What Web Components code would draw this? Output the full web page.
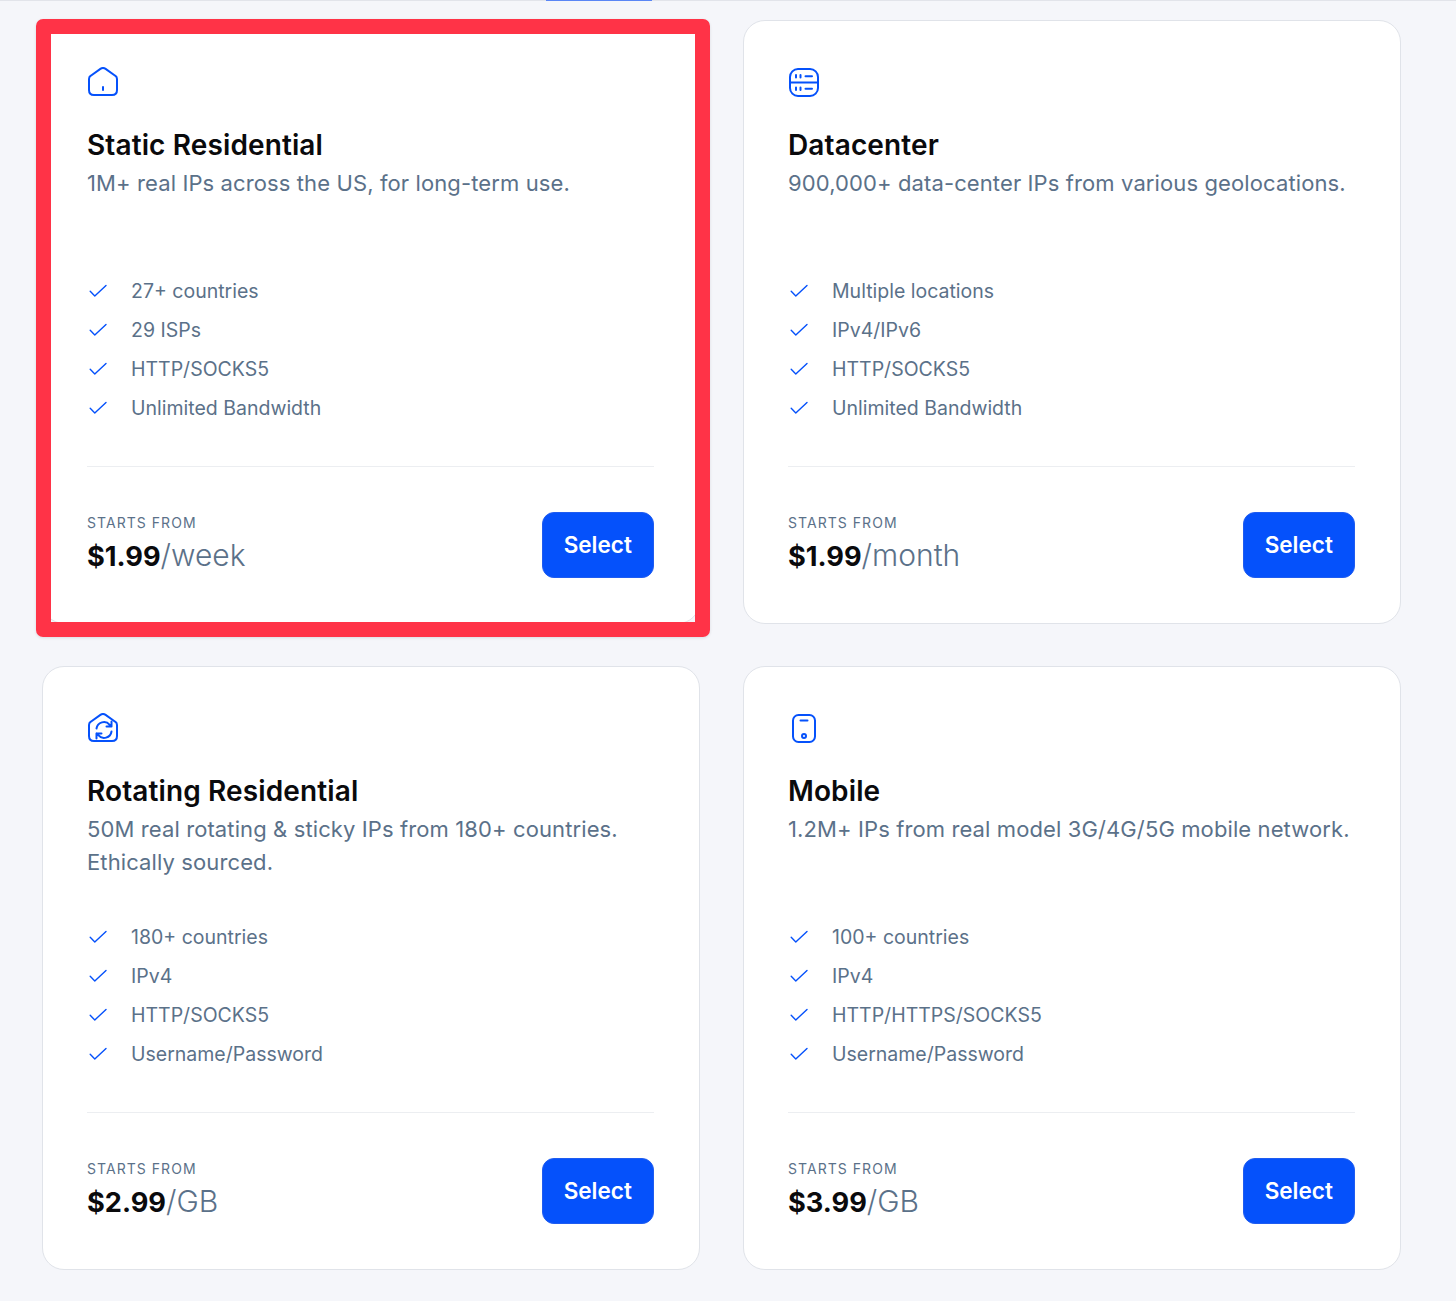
<!DOCTYPE html>
<html>
<head>
<meta charset="utf-8">
<style>
  html, body { margin: 0; padding: 0; }
  body {
    background: #f5f6fa;
    font-family: Inter, "Liberation Sans", sans-serif;
    height: 1301px;
    overflow: hidden;
  }
</style>
</head>
<body>
<template id="plan-card-tpl">
  <style>
    :host {
      display: flex;
      flex-direction: column;
      position: relative;
      box-sizing: border-box;
      height: 604px;
      padding: 46px 44.5px 44px 44.5px;
      background: #fff;
      border: 1px solid #e0e3e9;
      border-radius: 22px;
    }
    :host([highlighted])::after {
      content: "";
      position: absolute;
      left: -6.5px;
      top: -2px;
      width: 674px;
      height: 618px;
      box-sizing: border-box;
      border: 15px solid #ff3347;
      border-radius: 7px;
      box-shadow: 0 1px 3px rgba(30, 40, 60, 0.12);
    }
    .icon { height: 32px; display: flex; align-items: flex-start; margin-left: -0.5px; }
    ::slotted(svg) { display: block; }
    h2 {
      margin: 27px 0 0;
      font-size: 28px;
      line-height: 38px;
      font-weight: 600;
      letter-spacing: 0.12px;
      color: #0a0a0c;
    }
    p {
      margin: 3px 0 0;
      height: 66px;
      font-size: 22px;
      line-height: 33px;
      letter-spacing: 0.11px;
      color: #5b7189;
    }
    ul {
      list-style: none;
      margin: 43px 0 0;
      padding: 0;
      display: flex;
      flex-direction: column;
      gap: 9px;
    }
    .rule { height: 1px; background: #eceef1; margin-top: 43px; }
    .foot {
      display: flex;
      justify-content: space-between;
      align-items: flex-start;
      margin-top: 45px;
    }
    .label {
      margin-top: 1px;
      font-size: 14px;
      line-height: 20px;
      letter-spacing: 1.05px;
      color: #5b7189;
    }
    .price {
      margin-top: 4px;
      font-size: 30px;
      line-height: 36px;
      font-weight: 300;
      color: #5b7189;
    }
    .price b { font-size: 27.2px; font-weight: 700; color: #0a0a0c; }
    button {
      width: 112.5px;
      height: 66px;
      box-sizing: border-box;
      border: 1px solid #1f5cf0;
      border-radius: 12px;
      background: #0551fb;
      color: #fff;
      font: 600 22.5px Inter, "Liberation Sans", sans-serif;
      padding: 0 0 2px;
    }
  </style>
  <div class="icon"><slot name="icon"></slot></div>
  <h2></h2>
  <p></p>
  <ul><slot></slot></ul>
  <div class="rule"></div>
  <div class="foot">
    <div>
      <div class="label">STARTS FROM</div>
      <div class="price"><b></b><span></span></div>
    </div>
    <button>Select</button>
  </div>
</template>

<template id="plan-feature-tpl">
  <style>
    :host {
      display: flex;
      align-items: center;
      height: 30px;
      font-size: 19.5px;
      color: #5b7189;
    }
    svg { width: 18px; height: 16px; margin-left: 1.5px; margin-right: 24.500px; flex: none; }
  </style>
  <svg viewBox="0 0 18 16" fill="none" stroke="#0551fb" stroke-width="1.4" stroke-linecap="round" stroke-linejoin="round"><path d="M1.200 8.300 L5.800 13 L17 2.400"/></svg>
  <slot></slot>
</template>

<template id="plan-grid-tpl">
  <style>
    :host {
      display: grid;
      grid-template-columns: 658px 658px;
      column-gap: 43px;
      row-gap: 42px;
      padding: 19px 0 0 41.5px;
    }
  </style>
  <slot></slot>
</template>

<template id="top-bar-tpl">
  <style>
    :host { display: block; height: 1px; background: #e2e4ea; position: relative; }
    div { position: absolute; left: 546px; width: 106px; top: 0; height: 1px; background: #5a86f5; }
  </style>
  <div></div>
</template>

<top-bar></top-bar>
<plan-grid>
  <plan-card highlighted name="Static Residential" desc="1M+ real IPs across the US, for long-term use." amount="$1.99" unit="/week">
    <svg slot="icon" width="32" height="32" viewBox="0 0 32 32" fill="none" stroke="#0551fb" stroke-width="2" stroke-linecap="round" stroke-linejoin="round"><path d="M2 12 c0-1.400.6-2.500 1.800-3.300 L13.400 1.900 c1.600-1.100 3.600-1.100 5.200 0 L28.200 8.700 c1.200.8 1.800 1.900 1.800 3.300 V23 c0 3-2 5-5 5 H7 c-3 0-5-2-5-5 Z"/><path d="M16 20 v3"/></svg>
    <plan-feature>27+ countries</plan-feature>
    <plan-feature>29 ISPs</plan-feature>
    <plan-feature>HTTP/SOCKS5</plan-feature>
    <plan-feature>Unlimited Bandwidth</plan-feature>
  </plan-card>
  <plan-card name="Datacenter" desc="900,000+ data-center IPs from various geolocations." amount="$1.99" unit="/month">
    <svg slot="icon" width="32" height="32" viewBox="0 0 32 32" fill="none" stroke="#0551fb" stroke-width="2" stroke-linecap="round" stroke-linejoin="round"><rect x="2" y="2" width="28" height="27" rx="8"/><path d="M2 15.500 H30"/><path d="M8 8 v2.500 M12.500 8 v2.500 M17.500 9.200 H24"/><path d="M8 20.500 v2.500 M12.500 20.500 v2.500 M17.500 21.700 H24"/></svg>
    <plan-feature>Multiple locations</plan-feature>
    <plan-feature>IPv4/IPv6</plan-feature>
    <plan-feature>HTTP/SOCKS5</plan-feature>
    <plan-feature>Unlimited Bandwidth</plan-feature>
  </plan-card>
  <plan-card name="Rotating Residential" desc="50M real rotating &amp; sticky IPs from 180+ countries. Ethically sourced." amount="$2.99" unit="/GB">
    <svg slot="icon" width="32" height="32" viewBox="0 0 32 32" fill="none" stroke="#0551fb" stroke-width="2" stroke-linecap="round" stroke-linejoin="round"><path d="M2 12 c0-1.400.6-2.500 1.800-3.300 L13.400 1.900 c1.600-1.100 3.600-1.100 5.200 0 L28.200 8.700 c1.200.8 1.800 1.900 1.800 3.300 V23 c0 3-2 5-5 5 H7 c-3 0-5-2-5-5 Z"/><path d="M9.500 15.500 a7.500 7.500 0 0 1 13.200-3.700 l1.800 1.700 M24.500 8.500 v5 h-5"/><path d="M24.500 18.500 a7.500 7.500 0 0 1-13.200 3.700 l-1.800-1.700 M9.500 25.500 v-5 h5"/></svg>
    <plan-feature>180+ countries</plan-feature>
    <plan-feature>IPv4</plan-feature>
    <plan-feature>HTTP/SOCKS5</plan-feature>
    <plan-feature>Username/Password</plan-feature>
  </plan-card>
  <plan-card name="Mobile" desc="1.2M+ IPs from real model 3G/4G/5G mobile network." amount="$3.99" unit="/GB">
    <svg slot="icon" width="32" height="32" viewBox="0 0 32 32" fill="none" stroke="#0551fb" stroke-width="2" stroke-linecap="round" stroke-linejoin="round"><rect x="5" y="2" width="22" height="27" rx="5.500"/><path d="M12.500 7.500 H19.500"/><circle cx="16" cy="23" r="2"/></svg>
    <plan-feature>100+ countries</plan-feature>
    <plan-feature>IPv4</plan-feature>
    <plan-feature>HTTP/HTTPS/SOCKS5</plan-feature>
    <plan-feature>Username/Password</plan-feature>
  </plan-card>
</plan-grid>

<script>
  class SimpleEl extends HTMLElement {
    constructor(tplId) {
      super();
      this.attachShadow({ mode: 'open' });
      const tpl = document.getElementById(tplId);
      this.shadowRoot.appendChild(tpl.content.cloneNode(true));
    }
  }

  class TopBar extends SimpleEl {
    constructor() { super('top-bar-tpl'); }
  }
  class PlanGrid extends SimpleEl {
    constructor() { super('plan-grid-tpl'); }
  }
  class PlanFeature extends SimpleEl {
    constructor() { super('plan-feature-tpl'); }
  }
  class PlanCard extends SimpleEl {
    constructor() { super('plan-card-tpl'); }

    connectedCallback() {
      const root = this.shadowRoot;
      root.querySelector('h2').textContent = this.getAttribute('name');
      root.querySelector('p').textContent = this.getAttribute('desc');
      root.querySelector('.price b').textContent = this.getAttribute('amount');
      root.querySelector('.price span').textContent = this.getAttribute('unit');
    }
  }

  customElements.define('top-bar', TopBar);
  customElements.define('plan-grid', PlanGrid);
  customElements.define('plan-feature', PlanFeature);
  customElements.define('plan-card', PlanCard);
</script>
</body>
</html>
